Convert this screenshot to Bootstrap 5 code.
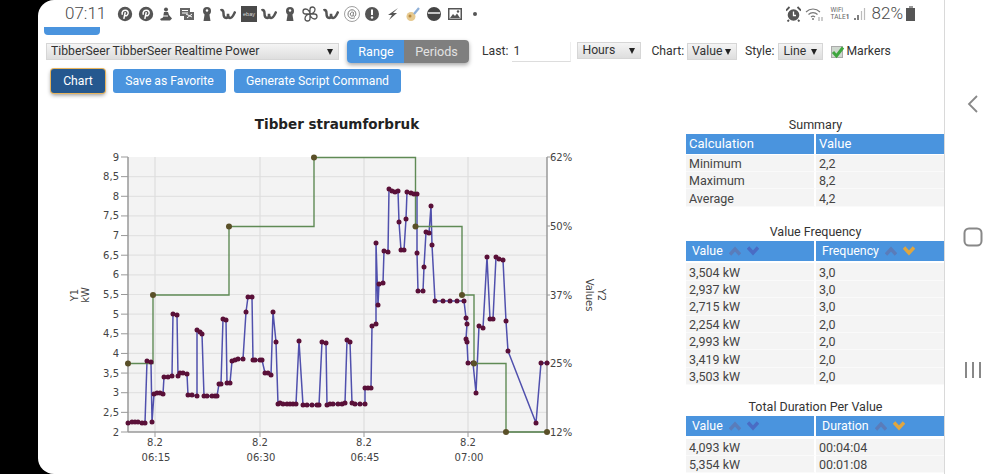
<!DOCTYPE html>
<html lang="en">
<head>
    <meta charset="UTF-8">
    <meta name="viewport" content="width=device-width, initial-scale=1.0">
    <title>Tibber straumforbruk</title>
    <link href="https://cdn.jsdelivr.net/npm/bootstrap@5.3.0/dist/css/bootstrap.min.css" rel="stylesheet">
    <script src="https://cdn.jsdelivr.net/npm/bootstrap@5.3.0/dist/js/bootstrap.bundle.min.js"></script>
    <style>
        html, body { height: 474px; overflow: hidden; background: #000; }
        body { font-family: Roboto, "Liberation Sans", sans-serif; font-size: 13px; color: #333; padding-left: 38px; }
        .screen { height: 474px; width: 962px; background: #fff; border-radius: 16px 0 0 16px; overflow: hidden; }
        .page-pane { width: 907px; height: 474px; overflow: hidden; border-right: 1px solid #d9d9d9; }
        .nav-pane { width: 55px; padding-top: 37px; }
        .nav-slot { height: 133px; }

        .status-bar { height: 27px; padding-left: 27px; padding-right: 28px; color: #555; }
        .status-time { font-size: 17px; font-weight: 300; width: 48px; color: #4a4a4a; }
        .status-icons { gap: 4.6px; }
        .status-icons svg { width: 16px; height: 16px; display: block; }
        .status-right svg { display: block; }
        .wifi-name { font-size: 6.5px; line-height: 7px; width: 20px; margin: 0 3px 0 3px; color: #666; }
        .batt-pct { font-size: 17px; font-weight: 300; margin: 0 3px 0 6px; color: #4a4a4a; }

        .stub-btn { width: 56px; height: 8px; margin-left: 6px; background: #4a94de; border-radius: 0 0 4px 4px; }

        .controls { height: 23px; margin: 5px 0 0 8px; }
        .pick { appearance: none; -webkit-appearance: none; height: 17px; border: 1px solid #d6d6d6; border-radius: 0; padding: 0 4px; font-size: 12.2px; line-height: 15px; color: #333;
            background: linear-gradient(#f4f4f4, #dedede); font-family: inherit; display: block; }
        .pick-wrap { position: relative; display: block; line-height: 0; }
        .pick-wrap::after { content: ""; position: absolute; right: 6px; top: 6px; border-left: 3.5px solid transparent; border-right: 3.5px solid transparent; border-top: 6px solid #222; pointer-events: none; }
        .pick-main { width: 293px; }
        .pick-unit { width: 64px; }
        .pick-chart { width: 50px; }
        .pick-style { width: 45px; }
        .seg { margin-left: 8px; box-shadow: 0 2px 4px rgba(0,0,0,.35); border-radius: 4px; }
        .seg .btn { height: 23px; padding: 0; font-size: 12.6px; line-height: 23px; border: 0; border-radius: 0; }
        .seg-on, .seg-on:hover { width: 58px; background: #4a94de; color: #fff; border-radius: 4px 0 0 4px !important; }
        .seg-off, .seg-off:hover { width: 65px; background: #7f7f7f; color: #e2e2e2; border-radius: 0 4px 4px 0 !important; }
        .ctl-label { font-size: 12.2px; color: #333; white-space: nowrap; }
        .last-input { width: 59px; height: 20px; border: 0; border-bottom: 1px solid #ddd; border-right: 1px solid #eee; padding: 0 1px; font-size: 12.2px; color: #333; font-family: inherit; background: #fff; outline: 0; border-radius: 0; }
        .tick-box { width: 12px; height: 12px; background: #cfd8cf; border: 1px solid #aaa; position: relative; }
        .tick-box svg { position: absolute; left: -1px; top: -2px; }
        .gap-last-label { margin-left: 13px; }
        .gap-last-input { margin-left: 4px; }
        .gap-unit { margin-left: 6px; margin-top: -2px; }
        .gap-chart-label { margin-left: 10px; }
        .gap-chart-pick { margin-left: 3px; }
        .gap-style-label { margin-left: 8px; }
        .gap-style-pick { margin-left: 4px; }
        .gap-tick { margin-left: 8px; }
        .gap-markers { margin-left: 3px; }

        .actions { margin: 6px 0 0 13px; gap: 8px; }
        .act-btn { height: 24px; padding: 0; border: 0; border-radius: 3px; background: #4a94de; color: #fff; font-size: 12.2px; line-height: 24px; }
        .act-btn:hover { background: #4a94de; color: #fff; }
        .act-chart, .act-chart:hover { width: 54px; background: #25588f; box-shadow: 0 0 0 1px #e8b45c, 0 2px 4px rgba(0,0,0,.45); }
        .act-fav { width: 113px; }
        .act-gen { width: 167px; }

        .main-row { margin-top: 12px; height: 369px; }
        .plot { width: 640px; height: 369px; margin-left: 8px; display: block; flex: none; }
        .plot text { font-family: "DejaVu Sans", sans-serif; fill: #444; font-size: 10px; }
        .plot .plot-title { font-size: 13.5px; font-weight: 700; fill: #222; }

        .side { width: 259px; padding-top: 9px; flex: none; }
        .side-block-a { margin-bottom: 14px; }
        .side-block-b { margin-bottom: 11px; }
        .side-cap { height: 20px; line-height: 22px; text-align: center; color: #333; font-size: 12.5px; }
        .stat { width: 259px; border-collapse: separate; border-spacing: 0; table-layout: fixed; margin: 0; }
        .stat th { height: 20px; background: #4a94de; color: #fff; font-weight: 400; font-size: 13px; padding: 0 0 0 3px; white-space: nowrap; }
        .stat td { height: 17.4px; padding: 1px 0 0 3px; line-height: 15px; background: #f4f4f4; color: #444; font-size: 12.5px; border-bottom: 1px solid #fafafa; }
        .stat th:first-child, .stat td:first-child { width: 130px; border-right: 2px solid #fff; }
        .stat-sort th { padding: 1px 0 0 6px; font-size: 12.4px; }
        .stat-gap td { height: 2.6px; padding: 0; background: #fff; border: 0 !important; line-height: 0; font-size: 0; }
        .stat-gap-thin td { height: .6px; }
        .chev { display: inline-block; vertical-align: -1px; margin-left: 6px; }
    </style>
</head>
<body>
    <svg width="0" height="0" class="d-block position-absolute">
        <symbol id="i-pin" viewBox="0 0 16 16"><circle cx="8" cy="8" r="7.2" fill="#555"/><path d="M6.8 12.8 8.3 6.2M5.4 8.8C4.2 5.6 6.6 4.2 8.4 4.2c2 0 3 1.500 2.700 3.200-.4 2-2.100 3-3.400 2" fill="none" stroke="#fff" stroke-width="1.500"/></symbol>
        <symbol id="i-fig" viewBox="0 0 16 16"><circle cx="8" cy="3.500" r="2" fill="#555"/><path d="M6 6h4l1 3 3 3.500-2 2H3l-1-1.500 3-1.500z" fill="#555"/><path d="M5 10h5" stroke="#fff"/></symbol>
        <symbol id="i-env" viewBox="0 0 16 16"><path d="M1 2h10v4h4v8H5v-4H1z" fill="#666"/><path d="M3 4.500h6M3 7h6M7 8l6 3M13 8l-5 4" stroke="#fff" fill="none"/></symbol>
        <symbol id="i-key" viewBox="0 0 16 16"><circle cx="8" cy="5" r="4" fill="#555"/><path d="M6 6 4.500 15h7L10 6z" fill="#555"/><circle cx="8" cy="4.500" r="1.200" fill="#fff"/></symbol>
        <symbol id="i-w" viewBox="0 0 16 16"><path d="M.5 4.500c2-1 3 0 3 2.800 0 3 .8 4.700 2.700 4.700 1.600 0 1.800-2 1.800-4.300 0 2.300.3 4.300 2.200 4.300 2.100 0 3.300-2.800 5-6.500" fill="none" stroke="#555" stroke-width="2.500"/></symbol>
        <symbol id="i-flower" viewBox="0 0 16 16"><path d="M8 8V3.500a2.500 2.500 0 0 1 5 0C13 6 10.500 8 8 8zM8 8h4.500a2.500 2.500 0 0 1 0 5C10 13 8 10.500 8 8zM8 8v4.500a2.500 2.500 0 0 1-5 0C3 10 5.500 8 8 8zM8 8H3.500a2.500 2.500 0 0 1 0-5C6 3 8 5.500 8 8z" fill="none" stroke="#555" stroke-width="1.300"/></symbol>
        <symbol id="i-at" viewBox="0 0 16 16"><circle cx="8" cy="8" r="7.500" fill="none" stroke="#888" stroke-width=".8"/><path d="M10.800 11.800C7.500 13.500 4 11.500 4 8.200 4 5.600 5.900 3.800 8 3.800c2.200 0 3.800 1.700 3.800 4 0 1.500-.6 2.500-1.500 2.500-.8 0-1.200-.8-1.100-1.600L9.500 6.500C8 5.500 6.300 6.500 6.300 8.200c0 1.800 1.900 2.500 3 1.200" fill="none" stroke="#666" stroke-width=".9"/></symbol>
        <symbol id="i-alert" viewBox="0 0 16 16"><circle cx="8" cy="8" r="7" fill="#555"/><path d="M8 3.500v5.500" stroke="#fff" stroke-width="2"/><circle cx="8" cy="11.500" r="1.200" fill="#fff"/></symbol>
        <symbol id="i-bolt" viewBox="0 0 16 16"><path d="M13 2 3 9h4l-3 5 8-7H8z" fill="#555"/></symbol>
        <symbol id="i-rocket" viewBox="0 0 16 16"><circle cx="6" cy="10.500" r="4.500" fill="#e6c98f"/><path d="M9 8l5-6" stroke="#8fb0d8" stroke-width="2.200"/><circle cx="5" cy="10" r="1.500" fill="#b8893f"/></symbol>
        <symbol id="i-half" viewBox="0 0 16 16"><circle cx="8" cy="8" r="7" fill="#444"/><path d="M2 7h12" stroke="#fff" stroke-width="1.400"/></symbol>
        <symbol id="i-img" viewBox="0 0 16 16"><rect x="1" y="2" width="14" height="12" fill="#555"/><rect x="2.500" y="3.500" width="11" height="9" fill="#fff"/><path d="M3 12l3-4 2 2 2-2.500 3 4.500z" fill="#555"/><circle cx="11" cy="5.500" r="1.200" fill="#555"/></symbol>
        <symbol id="i-up" viewBox="0 0 12 10"><path d="M1 8.500 6 3l5 5.500" fill="none" stroke="#5a7cba" stroke-width="3.400"/></symbol>
        <symbol id="i-down" viewBox="0 0 12 10"><path d="M1 1.500 6 7l5-5.500" fill="none" stroke="#4a6cc4" stroke-width="3.400"/></symbol>
        <symbol id="i-down-on" viewBox="0 0 12 10"><path d="M1 1.500 6 7l5-5.500" fill="none" stroke="#e0a63f" stroke-width="3.400"/></symbol>
    </svg>

    <div class="screen d-flex">
        <div class="page-pane">
            <div class="status-bar d-flex align-items-center">
                <div class="status-time">07:11</div>
                <div class="status-icons d-flex align-items-center ms-1">
                    <svg><use href="#i-pin"/></svg>
                    <svg><use href="#i-pin"/></svg>
                    <svg><use href="#i-fig"/></svg>
                    <svg><use href="#i-env"/></svg>
                    <svg><use href="#i-key"/></svg>
                    <svg><use href="#i-w"/></svg>
                    <svg viewBox="0 0 16 16"><rect width="16" height="16" fill="#4a4a4a"/><text x="8" y="10" text-anchor="middle" font-size="5.500" fill="#ddd" font-family="Liberation Sans">ebay</text></svg>
                    <svg><use href="#i-w"/></svg>
                    <svg><use href="#i-key"/></svg>
                    <svg><use href="#i-flower"/></svg>
                    <svg><use href="#i-w"/></svg>
                    <svg><use href="#i-at"/></svg>
                    <svg><use href="#i-alert"/></svg>
                    <svg><use href="#i-bolt"/></svg>
                    <svg><use href="#i-rocket"/></svg>
                    <svg><use href="#i-half"/></svg>
                    <svg><use href="#i-img"/></svg>
                    <svg viewBox="0 0 16 16"><circle cx="8" cy="8" r="2" fill="#555"/></svg>
                </div>
                <div class="status-right d-flex align-items-center ms-auto">
                    <svg width="15" height="16" viewBox="0 0 15 16"><circle cx="7.500" cy="9" r="5.800" fill="#555"/><path d="M7.500 5.500V9.500H10" stroke="#fff" stroke-width="1.300" fill="none"/><path d="M0 4.500 3.500 1M15 4.500 11.500 1M3 14l-1.500 1.500M12 14l1.500 1.500" stroke="#555" stroke-width="1.800"/></svg>
                    <svg width="19" height="14" viewBox="0 0 19 14" class="ms-1 me-1"><path d="M1 5c4-4 10-4 14 0M3.500 7.500c2.500-2.500 6.500-2.500 9 0M6 10c1.200-1.200 2.800-1.200 4 0" fill="none" stroke="#777" stroke-width="1.100"/><circle cx="8" cy="12" r="1" fill="#777"/><path d="M14 10v4M17 10v4" stroke="#999"/></svg>
                    <div class="wifi-name"><div>WiFi</div><div>TALE<b>1</b></div></div>
                    <svg width="12" height="13" viewBox="0 0 12 13"><path d="M1 11v2M4 8v5" stroke="#555" stroke-width="1.500"/><path d="M7.500 4v9M10.500 1v12" stroke="#bbb" stroke-width="1.200"/></svg>
                    <div class="batt-pct">82%</div>
                    <svg width="10" height="15" viewBox="0 0 10 15"><rect x="3" y="0" width="4" height="2" fill="#999"/><rect x="0" y="2" width="9" height="13" fill="#555"/></svg>
                </div>
            </div>
            <div class="stub-btn"></div>

            <div class="controls d-flex align-items-center">
                <span class="pick-wrap"><select class="pick pick-main"><option>TibberSeer TibberSeer Realtime Power</option></select></span>
                <div class="seg btn-group">
                    <button class="btn seg-on" type="button">Range</button>
                    <button class="btn seg-off" type="button">Periods</button>
                </div>
                <span class="ctl-label gap-last-label">Last:</span>
                <input class="last-input gap-last-input" value="1">
                <span class="pick-wrap gap-unit"><select class="pick pick-unit"><option>Hours</option></select></span>
                <span class="ctl-label gap-chart-label">Chart:</span>
                <span class="pick-wrap gap-chart-pick"><select class="pick pick-chart"><option>Value</option></select></span>
                <span class="ctl-label gap-style-label">Style:</span>
                <span class="pick-wrap gap-style-pick"><select class="pick pick-style"><option>Line</option></select></span>
                <span class="tick-box gap-tick"><svg width="14" height="14" viewBox="0 0 14 14"><path d="M2 7l3.500 4L12 2.500" fill="none" stroke="#3fa63f" stroke-width="3"/></svg></span>
                <span class="ctl-label gap-markers">Markers</span>
            </div>

            <div class="actions d-flex">
                <button class="btn act-btn act-chart" type="button">Chart</button>
                <button class="btn act-btn act-fav" type="button">Save as Favorite</button>
                <button class="btn act-btn act-gen" type="button">Generate Script Command</button>
            </div>

            <div class="main-row d-flex">
                <svg class="plot" id="plot" viewBox="46 105 640 369"></svg>
                <div class="side">
                    <div class="side-block-a">
                        <div class="side-cap">Summary</div>
                        <table class="stat">
                            <thead><tr><th>Calculation</th><th>Value</th></tr></thead>
                            <tbody>
                                <tr class="stat-gap stat-gap-thin"><td></td><td></td></tr>
                                <tr><td>Minimum</td><td>2,2</td></tr>
                                <tr><td>Maximum</td><td>8,2</td></tr>
                                <tr><td>Average</td><td>4,2</td></tr>
                            </tbody>
                        </table>
                    </div>
                    <div class="side-block-b">
                        <div class="side-cap">Value Frequency</div>
                        <table class="stat stat-sort">
                            <thead><tr>
                                <th>Value<svg class="chev" width="12" height="10"><use href="#i-up"/></svg><svg class="chev" width="12" height="10"><use href="#i-down"/></svg></th>
                                <th>Frequency<svg class="chev" width="12" height="10"><use href="#i-up"/></svg><svg class="chev" width="12" height="10"><use href="#i-down-on"/></svg></th>
                            </tr></thead>
                            <tbody>
                                <tr class="stat-gap"><td></td><td></td></tr>
                                <tr><td>3,504 kW</td><td>3,0</td></tr>
                                <tr><td>2,937 kW</td><td>3,0</td></tr>
                                <tr><td>2,715 kW</td><td>3,0</td></tr>
                                <tr><td>2,254 kW</td><td>2,0</td></tr>
                                <tr><td>2,993 kW</td><td>2,0</td></tr>
                                <tr><td>3,419 kW</td><td>2,0</td></tr>
                                <tr><td>3,503 kW</td><td>2,0</td></tr>
                            </tbody>
                        </table>
                    </div>
                    <div>
                        <div class="side-cap">Total Duration Per Value</div>
                        <table class="stat stat-sort">
                            <thead><tr>
                                <th>Value<svg class="chev" width="12" height="10"><use href="#i-up"/></svg><svg class="chev" width="12" height="10"><use href="#i-down"/></svg></th>
                                <th>Duration<svg class="chev" width="12" height="10"><use href="#i-up"/></svg><svg class="chev" width="12" height="10"><use href="#i-down-on"/></svg></th>
                            </tr></thead>
                            <tbody>
                                <tr class="stat-gap"><td></td><td></td></tr>
                                <tr><td>4,093 kW</td><td>00:04:04</td></tr>
                                <tr><td>5,354 kW</td><td>00:01:08</td></tr>
                            </tbody>
                        </table>
                    </div>
                </div>
            </div>
        </div>

        <div class="nav-pane">
            <div class="nav-slot d-flex align-items-center justify-content-center">
                <svg width="12" height="18" viewBox="0 0 12 18"><path d="M10 1 2 9l8 8" fill="none" stroke="#888" stroke-width="1.800"/></svg>
            </div>
            <div class="nav-slot d-flex align-items-center justify-content-center">
                <svg width="20" height="20" viewBox="0 0 20 20"><rect x="1.500" y="1.500" width="17" height="17" rx="4.500" fill="none" stroke="#888" stroke-width="2"/></svg>
            </div>
            <div class="nav-slot d-flex align-items-center justify-content-center">
                <svg width="18" height="18" viewBox="0 0 18 18"><path d="M2 1v16M9 1v16M16 1v16" stroke="#888" stroke-width="2"/></svg>
            </div>
        </div>
    </div>

    <script>
        const plot = document.getElementById('plot');
        const NS = 'http://www.w3.org/2000/svg';

        function add(name, attrs, txt) {
            const el = document.createElementNS(NS, name);
            for (const k in attrs) el.setAttribute(k, attrs[k]);
            if (txt !== undefined) el.textContent = txt;
            plot.appendChild(el);
            return el;
        }

        const left = 128, right = 547, top_ = 157, bottom = 432;
        const yOf = v => bottom - (v - 2) * (bottom - top_) / 7;

        add('text', { x: 337, y: 128.500, 'text-anchor': 'middle', class: 'plot-title' }, 'Tibber straumforbruk');
        add('rect', { x: left, y: top_, width: right - left, height: bottom - top_, fill: '#f3f3f3' });

        // horizontal grid + y1 labels
        for (let i = 0; i <= 14; i++) {
            const v = 2 + i / 2, y = yOf(v);
            if (i > 0 && i < 14) add('line', { x1: left, x2: right, y1: y, y2: y, stroke: '#e2e2e2', 'stroke-width': 1.2 });
            add('line', { x1: 121, x2: left, y1: y, y2: y, stroke: '#999' });
            add('text', { x: 119, y: y + 3.500, 'text-anchor': 'end' }, String(v).replace('.', ','));
        }

        // vertical grid + x labels
        [[155, '06:15'], [260, '06:30'], [364, '06:45'], [468, '07:00']].forEach(([x, t]) => {
            add('line', { x1: x, x2: x, y1: top_, y2: bottom, stroke: '#dedede', 'stroke-width': 1.2 });
            add('line', { x1: x, x2: x, y1: bottom, y2: bottom + 5, stroke: '#999' });
            add('text', { x: x, y: 446, 'text-anchor': 'middle' }, '8.2');
            add('text', { x: x + 1, y: 461, 'text-anchor': 'middle' }, t);
        });

        add('line', { x1: left, x2: left, y1: top_, y2: bottom, stroke: '#999', 'stroke-width': 1.5 });
        add('line', { x1: right, x2: right, y1: top_, y2: bottom, stroke: '#999', 'stroke-width': 1.5 });
        add('line', { x1: left, x2: right, y1: bottom, y2: bottom, stroke: '#999', 'stroke-width': 1.5 });

        [[157, '62%'], [226, '50%'], [295, '37%'], [363, '25%'], [432, '12%']].forEach(([y, t]) => {
            add('line', { x1: right, x2: right + 3, y1: y, y2: y, stroke: '#999' });
            add('text', { x: 550, y: y + 3.500 }, t);
        });

        add('text', { transform: 'translate(78 295) rotate(-90)', 'text-anchor': 'middle' }, 'Y1');
        add('text', { transform: 'translate(89 295) rotate(-90)', 'text-anchor': 'middle' }, 'kW');
        add('text', { transform: 'translate(598 295) rotate(90)', 'text-anchor': 'middle' }, 'Y2');
        add('text', { transform: 'translate(586 295) rotate(90)', 'text-anchor': 'middle' }, 'Values');

        // y2 series: step line
        const greenLine = [[128, 363.5], [153, 363.5], [153, 295], [229, 295], [229, 226.5], [314, 226.5], [314, 157.5], [415.5, 157.5], [415.5, 226.5], [462, 226.5], [462, 295], [474, 295], [474, 363.5], [506, 363.5], [506, 432], [547, 432]];
        const greenDots = [[128, 363.5], [153, 295], [229, 226.5], [314, 157.5], [415.5, 226.5], [462, 295], [474, 363.5], [506, 432], [547, 432]];

        // y1 series, read off the picture in pixels
        const blue = [[128,423],[132,422],[135,422],[138,422],[142,423],[145,423],[147,361],[151,362],[152,422],[154,394],[157,393],[160,393],[163,394],[164,377],[168,377],[172,376],[173,314],[177,315],[178,376],[180,373],[183,373],[187,374],[188,395],[192,395],[197,396],[197,330],[200,332],[202,334],[204,396],[207,396],[212,396],[215,396],[217,396],[219,384],[221,384],[223,319],[226,320],[227,383],[230,383],[232,361],[235,360],[238,359],[243,359],[246,312],[248,297],[252,297],[253,360],[255,360],[260,360],[262,360],[265,373],[268,373],[271,375],[273,312],[276,342],[278,404],[280,403],[283,404],[287,404],[290,404],[293,404],[296,404],[299,341],[303,405],[307,405],[312,405],[317,405],[319,405],[322,342],[326,343],[327,405],[330,404],[333,404],[338,404],[342,404],[345,403],[347,340],[350,342],[352,403],[355,404],[360,404],[365,404],[365,388],[368,388],[371,388],[372,326],[376,324],[376,243],[378,305],[379,284],[383,283],[384,251],[388,252],[389,189],[392,191],[395,192],[398,191],[399,222],[401,250],[404,250],[406,219],[407,192],[411,193],[414,194],[417,194],[417,253],[418,291],[423,291],[424,267],[426,232],[429,233],[431,206],[432,245],[435,301],[443,301],[450,301],[457,301],[464,301],[466,318],[467,324],[466,339],[467,342],[468,363],[473,363],[476,393],[479,326],[483,328],[487,257],[490,319],[493,319],[496,257],[499,259],[503,260],[506,321],[508,351],[536,423],[541,363],[547,363]];

        add('polyline', { points: blue.map(p => p.join(',')).join(' '), fill: 'none', stroke: '#5050ad', 'stroke-width': 1.5 });
        add('polyline', { points: greenLine.map(p => p.join(',')).join(' '), fill: 'none', stroke: '#5f8a55', 'stroke-width': 1.4 });
        blue.forEach(p => add('circle', { cx: p[0], cy: p[1], r: 2.5, fill: '#5a1038' }));
        greenDots.forEach(p => add('circle', { cx: p[0], cy: p[1], r: 3, fill: '#5a5028' }));
    </script>
</body>
</html>
